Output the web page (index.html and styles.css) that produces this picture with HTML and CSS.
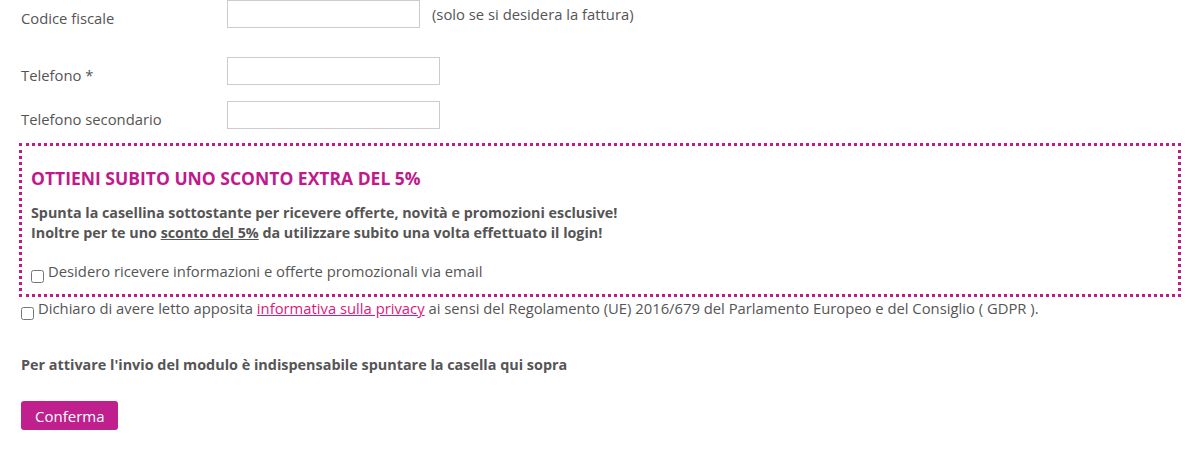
FILE: index.html
```html
<!DOCTYPE html>
<html lang="it">
<head>
    <meta charset="UTF-8">
    <meta name="viewport" content="width=device-width, initial-scale=1.0">
    <title>Registrazione</title>
    <link rel="stylesheet" href="styles.css">
</head>
<body>

<form id="registrazione">
    <div class="row">
        <label for="cf">Codice fiscale</label>
        <input type="text" id="cf" class="short">
        <span class="hint">(solo se si desidera la fattura)</span>
    </div>

    <div class="row row-tel">
        <label for="tel">Telefono *</label>
        <input type="text" id="tel">
    </div>

    <div class="row">
        <label for="tel2">Telefono secondario</label>
        <input type="text" id="tel2">
    </div>

    <div class="promo">
        <h3>OTTIENI SUBITO UNO SCONTO EXTRA DEL 5%</h3>
        <p>Spunta la casellina sottostante per ricevere offerte, novità e promozioni esclusive!<br>
        Inoltre per te uno <u>sconto del 5%</u> da utilizzare subito una volta effettuato il login!</p>
        <div class="check">
            <input type="checkbox" id="newsletter">
            <label for="newsletter">Desidero ricevere informazioni e offerte promozionali via email</label>
        </div>
    </div>

    <div class="check privacy">
        <input type="checkbox" id="privacy">
        <label for="privacy">Dichiaro di avere letto apposita <a href="#">informativa sulla privacy</a> ai sensi del Regolamento (UE) 2016/679 del Parlamento Europeo e del Consiglio ( GDPR ).</label>
    </div>

    <p class="avviso">Per attivare l'invio del modulo è indispensabile spuntare la casella qui sopra</p>

    <button type="submit">Conferma</button>
</form>

</body>
</html>
```

FILE: styles.css
```css
body {
    margin: 0;
    font-family: "Open Sans", Arial, sans-serif;
    font-size: 14.8px;
    color: #555;
}

#registrazione {
    padding: 0 12px 0 19px;
}

.row {
    display: flex;
    align-items: center;
    padding-left: 2px;
    margin-top: 16px;
}

.row:first-child {
    margin-top: 0;
}

.row-tel {
    margin-top: 29px;
}

.row label {
    width: 206px;
    padding-top: 8px;
}

.row input {
    width: 213px;
    height: 28px;
    box-sizing: border-box;
    border: 1px solid #ccc;
    padding: 4px 6px;
    margin: 0;
}

.row input.short {
    width: 193px;
}

.hint {
    margin-left: 12px;
}

.promo {
    border: 3px dotted #c0198c;
    padding: 14px 10px 11px 9px;
    margin-top: 14px;
}

.promo h3 {
    color: #c0198c;
    font-size: 17.5px;
    margin: 6px 0 13px;
}

.promo p {
    font-size: 14.3px;
    font-weight: bold;
    line-height: 20px;
    margin: 0 0 18px;
}

.check {
    display: flex;
    align-items: flex-start;
}

.check input {
    margin: 9px 4px 0 0;
    width: 13px;
    height: 13px;
}

.privacy {
    padding-left: 2px;
    margin-top: 1px;
}

a {
    color: #e0177a;
}

.avviso {
    font-size: 14.4px;
    font-weight: bold;
    margin: 35px 0 0 2px;
}

button {
    margin: 27px 0 0 2px;
    background-color: #c01f8e;
    color: white;
    font-family: inherit;
    font-size: 15px;
    padding: 5px 13px 4px 14px;
    border: none;
    border-radius: 3px;
    cursor: pointer;
}
```
